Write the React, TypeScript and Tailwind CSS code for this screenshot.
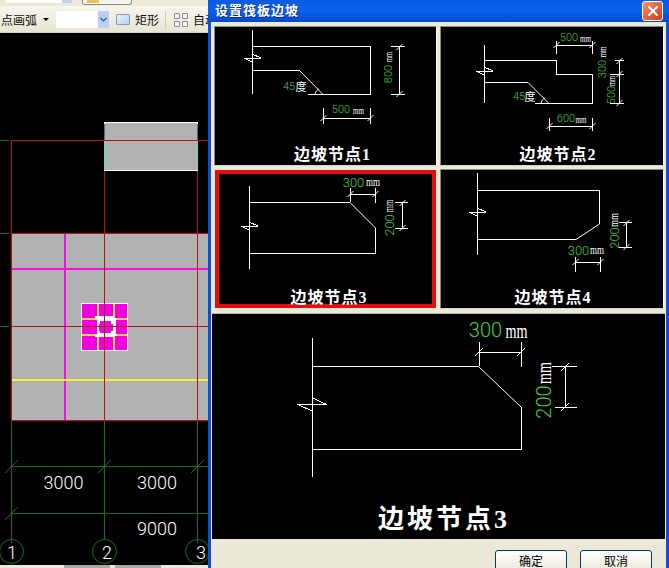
import React from 'react';
import { ChevronDown, X } from 'lucide-react';

// dim number, centred on x/y, rotated when it runs along a vertical dimension
const Num: React.FC<{ x: number; y: number; t: string; cls: string; rot?: boolean }> = ({ x, y, t, cls, rot }) => (
  <text
    x={x}
    y={y}
    textAnchor="middle"
    dominantBaseline="central"
    transform={rot ? `rotate(-90 ${x} ${y})` : undefined}
    className={`fill-[#40d040] font-['Roboto'] font-light ${cls}`}
  >
    {t}
  </text>
);

// the cad font has a very narrow "mm", so its width is forced with textLength
const Unit: React.FC<{ x: number; y: number; w: number; cls: string; rot?: boolean }> = ({ x, y, w, cls, rot }) => (
  <text
    x={x}
    y={y}
    textAnchor="middle"
    dominantBaseline="central"
    textLength={w}
    lengthAdjust="spacingAndGlyphs"
    transform={rot ? `rotate(-90 ${x} ${y})` : undefined}
    className={`fill-white font-['Liberation_Serif'] ${cls}`}
  >
    mm
  </text>
);

const Lines: React.FC<{ d: string }> = ({ d }) => (
  <path d={d} fill="none" stroke="#ffffff" strokeWidth={1} shapeRendering="crispEdges" />
);

const tick = (x: number, y: number, s = 3) => `M${x - s} ${y + s}L${x + s} ${y - s}`;
const brk = (x: number, y: number, s = 1) =>
  `M${x - 8 * s} ${y}H${x + 9 * s}L${x} ${y - 4 * s}M${x - 8 * s} ${y}L${x} ${y + 4 * s}`;

const Panel: React.FC<{
  viewBox: string;
  svgCls: string;
  box: string;
  caption: string;
  capCls: string;
  children: React.ReactNode;
}> = ({ viewBox, svgCls, box, caption, capCls, children }) => (
  <div className={`flex flex-col bg-black ${box}`}>
    <svg viewBox={viewBox} className={`block w-full shrink-0 ${svgCls}`}>
      {children}
    </svg>
    <div className={`flex-1 flex items-center justify-center text-white font-['Liberation_Serif','Noto_Sans_CJK_SC',serif] ${capCls}`}>
      {caption}
    </div>
  </div>
);

const sunken = 'border border-t-[#8c8a80] border-l-[#8c8a80] border-r-[#fdfcf8] border-b-[#d8d4c4]';

const Toolbar = () => (
  <div className="h-[33px] shrink-0 flex flex-col bg-[#ece9d8] border-b border-[#d8d4c0]">
    <div className="h-[7px] flex items-start border-b border-[#f8f7f0]">
      <div className="ml-[6px] w-[56px] h-[3px] bg-white" />
      <div className="w-[10px] h-[3px] bg-[#c4d2f0]" />
      <div className="ml-[10px] w-[50px] h-[5px] bg-[#f8f6ec] border-x border-b border-[#8f8f80] rounded-b-[3px] flex pl-[4px]">
        <div className="w-[12px] h-[3px] bg-[#f0c060]" />
      </div>
    </div>
    <div className="flex-1 flex items-center bg-gradient-to-b from-[#f6f5ec] to-[#e8e5d4] text-[12px] text-[#111] font-['Noto_Sans_CJK_SC',sans-serif] whitespace-nowrap overflow-hidden">
      <span className="ml-[1px] w-[36px]">点画弧</span>
      <span className="ml-[6px] w-0 h-0 border-x-[3px] border-x-transparent border-t-[3px] border-t-black" />
      <div className="ml-[7px] w-[53px] h-[17px] bg-white flex justify-end shrink-0">
        <div className="w-[11px] bg-[#bccef4] flex items-center justify-center">
          <ChevronDown size={11} strokeWidth={3} className="text-[#35508f]" />
        </div>
      </div>
      <div className="ml-[7px] w-[14px] h-[11px] shrink-0 border border-[#7f9db9] rounded-[1px] bg-gradient-to-br from-[#eaf0fb] to-[#b8cdf0]" />
      <span className="ml-[5px] w-[24px]">矩形</span>
      <div className="ml-[6px] w-px h-[18px] bg-[#cfccba] shrink-0" />
      <svg viewBox="0 0 14 14" className="ml-[8px] w-[14px] h-[14px] shrink-0">
        <path d="M.5.5h5v5h-5zM8.5.5h5v5h-5zM.5 8.5h5v5h-5zM8.5 8.5h5v5h-5z" fill="#eef0f4" stroke="#8a8f9c" />
      </svg>
      <span className="ml-[5px]">自动</span>
    </div>
  </div>
);

const Canvas = () => (
  <svg viewBox="0 33 208 532" className="block w-[208px] h-[532px] shrink-0 bg-black" shapeRendering="crispEdges">
    {/* green axis grid */}
    <path
      d="M0 140.5H9M0 233.5H9M0 326.5H9M11.5 420V543M104.5 420V539M197.5 420V543M11 466.5H208M11 513.5H208"
      stroke="#1a6e1a"
      fill="none"
    />
    <path
      d="M5 473L18 460M98 473L111 460M191 473L204 460M5 520L18 507"
      stroke="#1a6e1a"
      fill="none"
      shapeRendering="auto"
    />
    {/* small slab */}
    <rect x="104.5" y="122.5" width="93" height="48" fill="#b2b2b2" stroke="#ffffff" />
    <path d="M104.5 123.5V140M197.5 123.5V140" stroke="#666" />
    <path d="M104.5 141V170M197.5 141V170" stroke="#63d8d0" />
    {/* big slab */}
    <rect x="11" y="233" width="197" height="187" fill="#b2b2b2" />
    <path d="M65 234V420M11 269H208" stroke="#f010e0" strokeWidth={2} fill="none" />
    <path d="M11 380H208" stroke="#f4f040" strokeWidth={2} />
    {/* column */}
    <rect x="81.5" y="303.5" width="46" height="47" fill="#f000e0" stroke="#ffffff" />
    <path d="M97.5 304V350M113.5 304V350M82 319H127M82 335H127" stroke="#f4e030" strokeWidth={2} />
    <path d="M95 316H114V318H116V336H114V337H95V335H97V318H95Z" fill="#ffffff" />
    <path d="M100 321H111V324H113V331H111V333H100V331H99V324H100Z" fill="#e010d0" />
    {/* red axis lines */}
    <path
      d="M11 140.5H208M11.5 140V420M104.5 171V420M197.5 171V420M11 233.5H208M11 326.5H208M11 420.5H208"
      stroke="#b81414"
      fill="none"
    />
    <g shapeRendering="auto" fill="none" stroke="#1a6e1a">
      <circle cx="11.5" cy="551.5" r="12" />
      <circle cx="104.5" cy="551.5" r="12" />
      <circle cx="197.5" cy="551.5" r="12" />
    </g>
    <g shapeRendering="auto" className="fill-white font-['Roboto'] font-light text-[18px]" textAnchor="middle" dominantBaseline="central">
      <text x="63.5" y="482">3000</text>
      <text x="157" y="482">3000</text>
      <text x="157" y="528.5">9000</text>
      <text x="12" y="552">1</text>
      <text x="107" y="552">2</text>
      <text x="201" y="552">3</text>
    </g>
  </svg>
);

const Node1 = () => (
  <Panel viewBox="215 27 221 116" svgCls="h-[116px]" box={sunken} caption="边坡节点1" capCls="font-bold text-[16px] tracking-[1px] pl-[14px]">
    <Lines d={`M252.5 30V94M252.5 46.5H370.5V94.5H308M252.5 70.5H299.5${brk(252, 58)}`} />
    <path d="M299.5 70.5L323 94.5M315 94C316 91 317 90 319 89" stroke="#fff" fill="none" />
    <Num x={289} y={86} t="45" cls="text-[11px]" />
    <text x={301} y={86} textAnchor="middle" dominantBaseline="central" className="fill-white font-['Noto_Sans_CJK_SC'] text-[11px]">度</text>
    <Lines d={`M323.5 108V124M370.5 108V124M323.5 118.5H370.5M391 46.5H405M391 94.5H405M399.5 46V95`} />
    <path d={`${tick(323.5, 118)}${tick(370.5, 118)}${tick(399.5, 47)}${tick(399.5, 94)}`} stroke="#fff" fill="none" />
    <Num x={341} y={109} t="500" cls="text-[11px]" />
    <Unit x={358.5} y={109.5} w={11} cls="text-[11px]" />
    <Num x={388} y={74} t="800" cls="text-[11px]" rot />
    <Unit x={388} y={57} w={10} cls="text-[11px]" rot />
  </Panel>
);

const Node2 = () => (
  <Panel viewBox="441 27 222 116" svgCls="h-[116px]" box={sunken} caption="边坡节点2" capCls="font-bold text-[16px] tracking-[1px] pl-[12px]">
    <Lines d={`M484.5 45V103M484.5 60.5H556.5V74.5H592.5V103.5H535M484.5 82.5H528${brk(484, 71)}`} />
    <path d="M528 82.5L549 103.5M541 103C542 100 543 99 545 98" stroke="#fff" fill="none" />
    <Num x={519} y={96} t="45" cls="text-[11px]" />
    <text x={530} y={96} textAnchor="middle" dominantBaseline="central" className="fill-white font-['Noto_Sans_CJK_SC'] text-[11px]">度</text>
    <Lines d="M556.5 41V54M592.5 41V54M556.5 45.5H592.5M549.5 118V131M592.5 118V131M549.5 126.5H592.5M615 60.5H624M610 74.5H624M610 103.5H624M619.5 60V104" />
    <path d={`${tick(556.5, 45)}${tick(592.5, 45)}${tick(549.5, 126)}${tick(592.5, 126)}${tick(619.5, 61)}${tick(619.5, 74)}${tick(619.5, 103)}`} stroke="#fff" fill="none" />
    <Num x={569} y={37.5} t="500" cls="text-[11px]" />
    <Unit x={585.5} y={37.5} w={11} cls="text-[11px]" />
    <Num x={566} y={118.5} t="600" cls="text-[11px]" />
    <Unit x={581} y={118.5} w={11} cls="text-[11px]" />
    <Num x={602} y={69} t="300" cls="text-[11px]" rot />
    <Unit x={602} y={52} w={11} cls="text-[11px]" rot />
    <Num x={611} y={95} t="500" cls="text-[11px]" rot />
    <Unit x={611} y={81} w={10} cls="text-[11px]" rot />
  </Panel>
);

const Node3 = () => (
  <Panel viewBox="219 174 213 112" svgCls="h-[112px]" box="m-[1px] border-4 border-[#e01010]" caption="边坡节点3" capCls="font-bold text-[16px] tracking-[1px] pl-[7px] pb-[1px]">
    <Lines d={`M249.5 186V269M249.5 202.5H350M249.5 253.5H375.5V228${brk(249, 226)}`} />
    <path d="M350 202.5L375.5 228" stroke="#fff" fill="none" />
    <Lines d="M350.5 188V202M375.5 188V203M350.5 194.5H375.5M395 202.5H408M395 228.5H408M402.5 202V229" />
    <path d={`${tick(350.5, 194)}${tick(375.5, 194)}${tick(402.5, 203)}${tick(402.5, 228)}`} stroke="#fff" fill="none" />
    <Num x={353.5} y={182} t="300" cls="text-[13px]" />
    <Unit x={373} y={182} w={14} cls="text-[12px]" />
    <Num x={389} y={225} t="200" cls="text-[13px]" rot />
    <Unit x={389} y={206} w={13} cls="text-[12px]" rot />
  </Panel>
);

const Node4 = () => (
  <Panel viewBox="441 170 222 116" svgCls="h-[116px]" box={sunken} caption="边坡节点4" capCls="font-bold text-[16px] tracking-[1px] pl-[2px] pb-[1px]">
    <Lines d={`M477.5 173V255M477.5 190.5H599.5V224M477.5 239.5H576${brk(477, 212)}`} />
    <path d="M599.5 224L576 239.5" stroke="#fff" fill="none" />
    <Lines d="M575.5 257V272M600.5 257V272M575.5 262.5H600.5M619 222.5H632M619 247.5H632M626.5 222V248" />
    <path d={`${tick(575.5, 262)}${tick(600.5, 262)}${tick(626.5, 223)}${tick(626.5, 247)}`} stroke="#fff" fill="none" />
    <Num x={578.5} y={250} t="300" cls="text-[13px]" />
    <Unit x={597} y={250} w={14} cls="text-[12px]" />
    <Num x={614} y={238} t="200" cls="text-[13px]" rot />
    <Unit x={614} y={220} w={14} cls="text-[12px]" rot />
  </Panel>
);

const Detail = () => (
  <Panel viewBox="213 314 452 186" svgCls="h-[186px]" box="h-full border-t border-t-[#b8b4a8]" caption="边坡节点3" capCls="font-semibold text-[26px] tracking-[3px] pl-[11px]">
    <Lines d="M312.5 338V477M312.5 366.5H479M312.5 449.5H521.5V407M298 404.5H327L313 398M298 404.5L313 411" />
    <path d="M479 366.5L521.5 407" stroke="#fff" fill="none" />
    <Lines d="M479.5 342V366M521.5 342V367M479.5 352.5H521.5M552 366.5H577M555 407.5H577M565.5 366V408" />
    <path d={`${tick(479.5, 352, 4)}${tick(521.5, 352, 4)}${tick(565.5, 367, 4)}${tick(565.5, 407, 4)}`} stroke="#fff" fill="none" />
    <Num x={486} y={330} t="300" cls="text-[20px]" />
    <Unit x={517} y={331} w={22} cls="text-[20px]" />
    <Num x={544} y={402} t="200" cls="text-[20px]" rot />
    <Unit x={544} y={373} w={22} cls="text-[20px]" rot />
  </Panel>
);

const XpButton: React.FC<{ label: string }> = ({ label }) => (
  <button className="w-[72px] h-[22px] shrink-0 rounded-[3px] border border-[#003c74] bg-gradient-to-b from-white to-[#ece9d8] text-[12px] leading-none text-black font-['Noto_Sans_CJK_SC',sans-serif]">
    {label}
  </button>
);

const Dialog = () => (
  <div className="w-[461px] h-[568px] shrink-0 flex flex-col bg-[#ece9d8] border-x-[3px] border-[#0a4fd8]">
    <div className="h-[22px] shrink-0 -mx-[3px] px-[7px] flex items-center justify-between bg-gradient-to-b from-[#0a5ae0] via-[#0a62ec] to-[#0848c8]">
      <span className="pb-[2px] text-white text-[13px] font-bold tracking-[1px] font-['Noto_Sans_CJK_SC',sans-serif] [text-shadow:1px_1px_0_#0a2a80]">
        设置筏板边坡
      </span>
      <div className="w-[21px] h-[20px] mr-[-1px] rounded-[3px] border border-white bg-gradient-to-br from-[#f09070] to-[#d03808] flex items-center justify-center">
        <X size={16} strokeWidth={3} className="text-white" />
      </div>
    </div>
    <div className="mt-[4px] ml-[3px] grid grid-cols-[223px_224px] grid-rows-[140px_140px] gap-[3px]">
      <Node1 />
      <Node2 />
      <Node3 />
      <Node4 />
    </div>
    <div className="mt-[4px] mx-[1px] h-[226px] shrink-0">
      <Detail />
    </div>
    <div className="mt-[11px] pr-[14px] flex justify-end gap-[13px]">
      <XpButton label="确定" />
      <XpButton label="取消" />
    </div>
  </div>
);

const App: React.FC = () => {
  return (
    <div className="w-[669px] h-[568px] flex overflow-hidden bg-black">
      <div className="w-[208px] shrink-0 flex flex-col">
        <Toolbar />
        <Canvas />
        <div className="h-[3px] flex bg-[#ece9d8]">
          <div className="ml-[64px] w-[46px] bg-[#a8a8a0]" />
          <div className="ml-[5px] w-[46px] bg-[#a8a8a0]" />
        </div>
      </div>
      <Dialog />
    </div>
  );
};

export default App;
